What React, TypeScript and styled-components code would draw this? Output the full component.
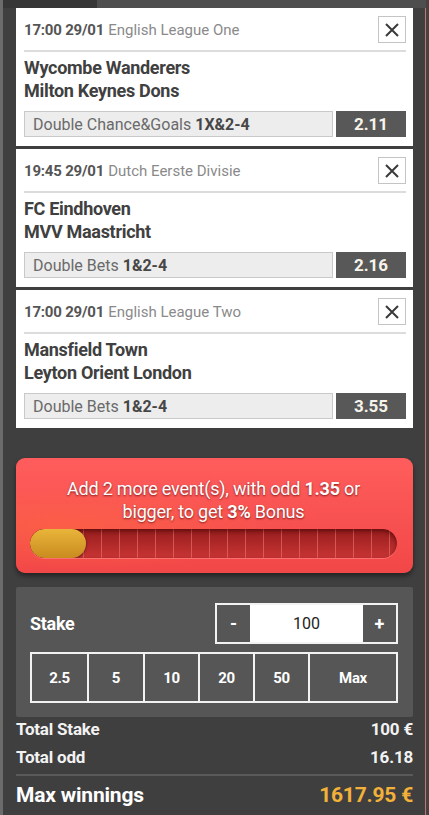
import React from 'react';
import styled, { createGlobalStyle } from 'styled-components';

const GlobalStyle = createGlobalStyle`
  body {
    margin: 0;
    background: #3e3e3e;
    font-family: Roboto, "Liberation Sans", Arial, sans-serif;
  }
  * { box-sizing: border-box; }
`;

const Slip = styled.div`
  width: 429px;
  height: 815px;
  overflow: hidden;
  background: #3f3f3f;
  border-left: 3px solid #6b6b6b;
  border-right: 3px solid #4a4040;
  box-shadow: inset -1px 0 0 #b57a72;
`;

const TopStrip = styled.div`
  display: flex;
  height: 8px;
`;

const Tab = styled.div<{ $active?: boolean }>`
  width: ${({ $active }) => ($active ? '94px' : 'auto')};
  flex: ${({ $active }) => ($active ? '0 0 auto' : '1')};
  background: ${({ $active }) => ($active ? '#363636' : '#4e4e4e')};
`;

const Body = styled.div`
  padding: 0 13px;
`;

const Events = styled.div`
  display: flex;
  flex-direction: column;
  gap: 3px;
`;

const Card = styled.div`
  background: #ffffff;
  padding: 0 7px 7px 8px;
  height: 138px;
`;

const CardHeader = styled.div`
  display: flex;
  align-items: center;
  justify-content: space-between;
  height: 44px;
  border-bottom: 2px solid #dcdcdc;
  font-size: 15px;
  padding-top: 1px;
`;

const Time = styled.span`
  font-weight: 700;
  color: #555;
  letter-spacing: -0.2px;
`;

const League = styled.span`
  color: #8a8a8a;
  margin-left: 4px;
`;

const CloseBox = styled.div`
  width: 28px;
  height: 27px;
  border: 1px solid #c4c4c4;
  display: flex;
  align-items: center;
  justify-content: center;
`;

const Teams = styled.div`
  padding-top: 4px;
  font-size: 18px;
  font-weight: 700;
  color: #404040;
  line-height: 23px;
  letter-spacing: -0.3px;
`;

const Market = styled.div`
  display: flex;
  gap: 3px;
  margin-top: 9px;
  height: 26px;
`;

const Selection = styled.div`
  flex: 1;
  background: #ededed;
  border: 1px solid #c9c9c9;
  display: flex;
  align-items: center;
  padding-left: 8px;
  font-size: 16px;
  color: #6a6a6a;
  b { color: #474747; margin-left: 4px; }
`;

const Odd = styled.div`
  width: 70px;
  background: #585858;
  color: #f6f4ea;
  font-weight: 700;
  font-size: 17px;
  display: flex;
  align-items: center;
  justify-content: center;
`;

const Bonus = styled.div`
  margin-top: 30px;
  height: 115px;
  border-radius: 9px;
  background:
    radial-gradient(ellipse at 12% 60%, rgba(255, 110, 60, 0.45), transparent 45%),
    linear-gradient(#ff5d5d, #f24747);
  box-shadow: 0 3px 5px rgba(0, 0, 0, 0.45);
  padding: 19px 16px 14px 14px;
`;

const BonusText = styled.div`
  text-align: center;
  color: #fff;
  font-size: 18px;
  line-height: 23px;
  text-shadow: 0 1px 2px rgba(80, 0, 0, 0.7);
  letter-spacing: -0.2px;
`;

const Track = styled.div`
  margin-top: 6px;
  height: 29px;
  border-radius: 15px;
  background:
    repeating-linear-gradient(90deg, transparent 0 17px, rgba(255, 140, 140, 0.45) 17px 18px),
    linear-gradient(#961d1d, #c93434);
  box-shadow: inset 0 2px 4px rgba(60, 0, 0, 0.6), 0 1px 0 rgba(255, 150, 150, 0.5);
  overflow: hidden;
`;

const Fill = styled.div`
  height: 100%;
  border-radius: 15px;
  background: linear-gradient(#e9b53a, #c98b1f);
  box-shadow: 0 1px 3px rgba(0, 0, 0, 0.5);
`;

const StakePanel = styled.div`
  margin-top: 14px;
  height: 130px;
  background: #565656;
  border-radius: 2px;
  padding: 16px 15px 14px 14px;
`;

const StakeRow = styled.div`
  display: flex;
  align-items: center;
  justify-content: space-between;
  height: 41px;
`;

const StakeLabel = styled.span`
  color: #fff;
  font-size: 18px;
  font-weight: 700;
  letter-spacing: -0.3px;
`;

const Stepper = styled.div`
  display: flex;
  width: 183px;
  height: 41px;
  border: 2px solid #f2f2f2;
`;

const StepButton = styled.div`
  width: 33px;
  background: #565656;
  color: #fff;
  font-weight: 700;
  font-size: 18px;
  display: flex;
  align-items: center;
  justify-content: center;
`;

const StakeInput = styled.div`
  flex: 1;
  background: #fff;
  color: #222;
  font-size: 16px;
  display: flex;
  align-items: center;
  justify-content: center;
`;

const QuickGrid = styled.div`
  display: grid;
  grid-template-columns: 55px 54px 53px 53px 53px 1fr;
  gap: 2px;
  padding: 2px;
  margin-top: 8px;
  height: 51px;
  background: #f2f2f2;
`;

const QuickButton = styled.div`
  background: #565656;
  color: #fff;
  font-size: 15px;
  font-weight: 700;
  display: flex;
  align-items: center;
  justify-content: center;
  letter-spacing: -0.3px;
`;

const Totals = styled.div`
  margin-top: -2px;
`;

const TotalRow = styled.div`
  display: flex;
  justify-content: space-between;
  align-items: center;
  height: 28px;
  color: #f2f2f2;
  font-size: 17px;
  font-weight: 700;
  letter-spacing: -0.2px;
`;

const Divider = styled.div`
  height: 2px;
  background: #5a5a5a;
  margin-top: 3px;
`;

const WinRow = styled(TotalRow)`
  height: 38px;
  font-size: 21px;
  color: #fff;
`;

const WinValue = styled.span`
  color: #f3b13a;
`;

const CloseIcon = () => (
  <svg width="16" height="16" viewBox="0 0 16 16">
    <path d="M2 2 L14 14 M14 2 L2 14" stroke="#3a3a3a" strokeWidth="2" />
  </svg>
);

const events = [
  {
    time: '17:00 29/01',
    league: 'English League One',
    home: 'Wycombe Wanderers',
    away: 'Milton Keynes Dons',
    market: 'Double Chance&Goals',
    pick: '1X&2-4',
    odd: '2.11',
  },
  {
    time: '19:45 29/01',
    league: 'Dutch Eerste Divisie',
    home: 'FC Eindhoven',
    away: 'MVV Maastricht',
    market: 'Double Bets',
    pick: '1&2-4',
    odd: '2.16',
  },
  {
    time: '17:00 29/01',
    league: 'English League Two',
    home: 'Mansfield Town',
    away: 'Leyton Orient London',
    market: 'Double Bets',
    pick: '1&2-4',
    odd: '3.55',
  },
];

const quickStakes = ['2.5', '5', '10', '20', '50', 'Max'];

export default function App() {
  return (
    <>
      <GlobalStyle />
      <Slip>
        <TopStrip>
          <Tab $active />
          <Tab />
        </TopStrip>
        <Body>
          <Events>
            {events.map((ev, i) => (
              <Card key={i}>
                <CardHeader>
                  <div>
                    <Time>{ev.time}</Time>
                    <League>{ev.league}</League>
                  </div>
                  <CloseBox>
                    <CloseIcon />
                  </CloseBox>
                </CardHeader>
                <Teams>
                  <div>{ev.home}</div>
                  <div>{ev.away}</div>
                </Teams>
                <Market>
                  <Selection>
                    {ev.market}
                    <b>{ev.pick}</b>
                  </Selection>
                  <Odd>{ev.odd}</Odd>
                </Market>
              </Card>
            ))}
          </Events>

          <Bonus>
            <BonusText>
              Add 2 more event(s), with odd <b>1.35</b> or
              <br />
              bigger, to get <b>3%</b> Bonus
            </BonusText>
            <Track>
              <Fill style={{ width: `${(56 / 367) * 100}%` }} />
            </Track>
          </Bonus>

          <StakePanel>
            <StakeRow>
              <StakeLabel>Stake</StakeLabel>
              <Stepper>
                <StepButton>-</StepButton>
                <StakeInput>100</StakeInput>
                <StepButton>+</StepButton>
              </Stepper>
            </StakeRow>
            <QuickGrid>
              {quickStakes.map((q) => (
                <QuickButton key={q}>{q}</QuickButton>
              ))}
            </QuickGrid>
          </StakePanel>

          <Totals>
            <TotalRow>
              <span>Total Stake</span>
              <span>100 €</span>
            </TotalRow>
            <TotalRow>
              <span>Total odd</span>
              <span>16.18</span>
            </TotalRow>
            <Divider />
            <WinRow>
              <span>Max winnings</span>
              <WinValue>1617.95 €</WinValue>
            </WinRow>
          </Totals>
        </Body>
      </Slip>
    </>
  );
}
